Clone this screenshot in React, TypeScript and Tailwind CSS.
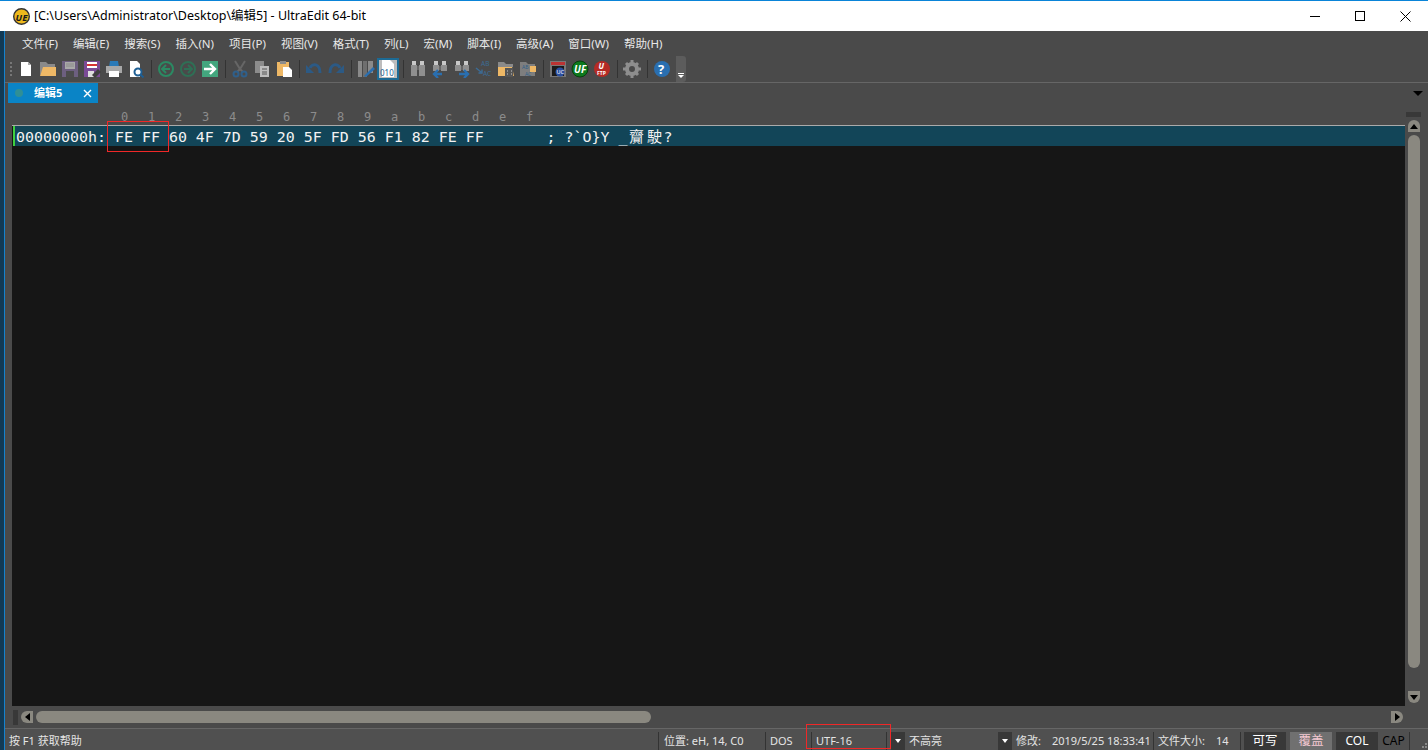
import type { ReactNode } from "react"

const mono = "font-['DejaVu_Sans_Mono','Noto_Sans_CJK_SC',monospace]"
const ui = "font-['Noto_Sans','Noto_Sans_CJK_SC',sans-serif]"

const menus = ["文件(F)", "编辑(E)", "搜索(S)", "插入(N)", "项目(P)", "视图(V)", "格式(T)", "列(L)", "宏(M)", "脚本(I)", "高级(A)", "窗口(W)", "帮助(H)"]
const rulerDigits = ["0", "1", "2", "3", "4", "5", "6", "7", "8", "9", "a", "b", "c", "d", "e", "f"]

function Sep() {
  return (
    <div className="flex w-2 justify-center">
      <div className="h-[18px] w-px bg-[#333]" />
    </div>
  )
}

function Btn({ children, active }: { children: ReactNode; active?: boolean }) {
  return (
    <div className={`flex h-[22px] w-[22px] items-center justify-center ${active ? "border-2 border-[#1c6a94] bg-[#bdbdbd]" : ""}`}>
      <svg className="shrink-0" width="18" height="18" viewBox="0 0 18 18">
        {children}
      </svg>
    </div>
  )
}

function Binoculars({ bottom = 16 }: { bottom?: number }) {
  return (
    <g>
      <rect x="3" y="1" width="4" height="4" fill="#c8c8c8" />
      <rect x="11" y="1" width="4" height="4" fill="#c8c8c8" />
      <rect x="2" y="5" width="6" height={bottom - 5} fill="#8f8f8f" />
      <rect x="10" y="5" width="6" height={bottom - 5} fill="#8f8f8f" />
      <rect x="8" y="6" width="2" height="4" fill="#666" />
    </g>
  )
}

function Toolbar() {
  return (
    <div className="flex h-[26px] items-center">
      <div className="ml-[5px] mr-[3px] flex h-[14px] w-[2px] flex-col justify-between">
        <div className="h-[2px] w-[2px] bg-[#777]" />
        <div className="h-[2px] w-[2px] bg-[#777]" />
        <div className="h-[2px] w-[2px] bg-[#777]" />
        <div className="h-[2px] w-[2px] bg-[#777]" />
      </div>
      <Btn><path d="M4 2h7l3 3v11H4z" fill="#fff" /><path d="M11 2v3h3" fill="#aaa" /></Btn>
      <Btn><path d="M1 2h6l2 2h7v3H5L1 16z" fill="#8a8a8a" /><path d="M1 16l3-9h13v9z" fill="#eeb866" /></Btn>
      <Btn><path d="M1 1h16v16H1z" fill="#6d5f80" /><rect x="4" y="2" width="10" height="7" fill="#a9a9a9" /><path d="M5 4h8M5 6h8" stroke="#8a8a8a" /><rect x="5" y="11" width="8" height="6" fill="#4c4c4c" /></Btn>
      <Btn><path d="M1 1h16v16H1z" fill="#7a4a96" /><rect x="4" y="2" width="10" height="6" fill="#fff" /><rect x="4" y="4" width="10" height="2" fill="#d63333" /><rect x="5" y="11" width="6" height="6" fill="#ddd" /><path d="M9 15l6-6 3 3-6 6z" fill="#3f3f3f" /></Btn>
      <Btn><path d="M5 1h8l1 6H4z" fill="#2a7ab8" /><rect x="1" y="6" width="16" height="7" fill="#a8a8a8" /><rect x="4" y="11" width="10" height="6" fill="#fff" /></Btn>
      <Btn><path d="M3 1h7l3 3v13H3z" fill="#fff" /><circle cx="11" cy="12" r="3.5" fill="#fff" stroke="#1e5f94" strokeWidth="2" /><path d="M13.5 14.5l3 3" stroke="#1e5f94" strokeWidth="2" /></Btn>
      <Sep />
      <Btn><circle cx="9" cy="9" r="7" fill="none" stroke="#2b8a63" strokeWidth="2" /><path d="M13 9H6M9 5L5 9l4 4" fill="none" stroke="#2b8a63" strokeWidth="2" /></Btn>
      <Btn><circle cx="9" cy="9" r="7" fill="none" stroke="#2f6f55" strokeWidth="2" /><path d="M5 9h7M9 5l4 4-4 4" fill="none" stroke="#2f6f55" strokeWidth="2" /></Btn>
      <Btn><rect x="1" y="1" width="16" height="16" fill="#43a67e" /><path d="M3 9h10M9 4l5 5-5 5" fill="none" stroke="#fff" strokeWidth="2.4" /></Btn>
      <Sep />
      <Btn><path d="M4 1l5 8 5-8M9 9l-3 3M9 9l3 3" fill="none" stroke="#666" strokeWidth="2" /><circle cx="5" cy="14" r="2.5" fill="none" stroke="#2f5f8a" strokeWidth="2" /><circle cx="13" cy="14" r="2.5" fill="none" stroke="#2f5f8a" strokeWidth="2" /></Btn>
      <Btn><rect x="2" y="1" width="9" height="12" fill="#8c8c8c" /><rect x="7" y="6" width="9" height="11" fill="#bdbdbd" /><path d="M9 9h5M9 12h5M9 14h5" stroke="#555" /></Btn>
      <Btn><rect x="2" y="2" width="12" height="14" fill="#eeb866" /><rect x="5" y="1" width="6" height="3" fill="#8c8c8c" /><path d="M8 7h6l3 3v7H8z" fill="#fff" /></Btn>
      <Sep />
      <Btn><path d="M5 8C7 3 15 3 15 13" fill="none" stroke="#2c5a85" strokeWidth="3" /><path d="M1 5v8h8z" fill="#2c5a85" /></Btn>
      <Btn><path d="M13 8C11 3 3 3 3 13" fill="none" stroke="#2c5a85" strokeWidth="3" /><path d="M17 5v8H9z" fill="#2c5a85" /></Btn>
      <Sep />
      <Btn><rect x="1" y="1" width="4" height="16" fill="#8a8a8a" /><rect x="6" y="1" width="4" height="16" fill="#6f6f6f" /><rect x="11" y="1" width="5" height="12" fill="#8a8a8a" /><path d="M7 16l9-9 2 2-9 8z" fill="#2a6fb0" /></Btn>
      <Btn active><path d="M3 0h8l4 4v13H3z" fill="#fff" /><text x="1" y="16" fontSize="8" fill="#1e5f94" className={ui}>010</text></Btn>
      <Sep />
      <Btn><Binoculars /></Btn>
      <Btn><Binoculars bottom={11} /><path d="M11 14H3M7 10l-4 4 4 4" fill="none" stroke="#2a6fb0" strokeWidth="2.4" /></Btn>
      <Btn><Binoculars bottom={11} /><path d="M6 14h9M11 10l4 4-4 4" fill="none" stroke="#2a6fb0" strokeWidth="2.4" /></Btn>
      <Btn><text x="6" y="6" fontSize="6.5" fill="#3c6c96" className={ui}>AB</text><text x="8" y="16" fontSize="6.5" fill="#3c6c96" className={ui}>AC</text><path d="M1 8l5 4M3.5 13H7V9.5" fill="none" stroke="#3c6c96" strokeWidth="1.4" /></Btn>
      <Btn><path d="M1 2h6l2 2h7v3H1z" fill="#8a8a8a" /><path d="M1 7h14l2 9H1z" fill="#eeb866" /><rect x="8" y="8" width="8" height="9" fill="#555" /><path d="M10 11h1M14 11h1M10 14h1M14 14h1" stroke="#ccc" /></Btn>
      <Btn><path d="M1 2h6l2 2h7v12H1z" fill="#7e7e7e" /><rect x="11" y="6" width="6" height="6" fill="#eeb866" /><text x="3" y="9" fontSize="5" fill="#2f5f8a" className={ui}>AB</text><text x="6" y="16" fontSize="5" fill="#2f5f8a" className={ui}>AC</text></Btn>
      <Sep />
      <Btn><rect x="1" y="1" width="16" height="16" fill="#777" /><rect x="2" y="2" width="14" height="3" fill="#bb3333" /><rect x="3" y="6" width="12" height="10" fill="#1a1a1a" /><circle cx="11" cy="12" r="4.5" fill="#2a4fa0" /><text x="7.5" y="14" fontSize="5.5" fill="#fff" className={ui}>UC</text></Btn>
      <Btn><circle cx="9" cy="9" r="8" fill="#0d7a1e" stroke="#08400f" /><text x="3" y="13" fontSize="10" fontWeight="700" fontStyle="italic" fill="#fff" className={ui}>UF</text></Btn>
      <Btn><circle cx="9" cy="9" r="8" fill="#b52b25" /><text x="5.5" y="9" fontSize="8" fontWeight="700" fontStyle="italic" fill="#fff" className={ui}>U</text><text x="4" y="15" fontSize="5" fontWeight="700" fill="#fff" className={ui}>FTP</text></Btn>
      <Sep />
      <Btn><circle cx="9" cy="9" r="5" fill="none" stroke="#8e8e8e" strokeWidth="4" /><path d="M9 0v4M9 14v4M0 9h4M14 9h4M3 3l3 3M12 12l3 3M15 3l-3 3M6 12l-3 3" stroke="#8e8e8e" strokeWidth="3" /></Btn>
      <Sep />
      <Btn><circle cx="9" cy="9" r="8" fill="#2a6fb0" /><text x="5" y="14" fontSize="13" fontWeight="700" fill="#fff" className={ui}>?</text></Btn>
      <div className="ml-[3px] flex h-[26px] w-[10px] flex-col items-center justify-end rounded-r-[3px] bg-[#5c5c5c] pb-1">
        <div className="mb-px h-px w-[6px] bg-white" />
        <div className="h-0 w-0 border-x-[3px] border-t-[3px] border-x-transparent border-t-white" />
      </div>
    </div>
  )
}

function ScrollArrow({ dir }: { dir: "up" | "down" | "left" | "right" }) {
  const arrow =
    dir === "up"
      ? "border-x-[4px] border-b-[5px] border-x-transparent border-b-black"
      : dir === "down"
        ? "border-x-[4px] border-t-[5px] border-x-transparent border-t-black"
        : dir === "left"
          ? "border-y-[4px] border-r-[5px] border-y-transparent border-r-black"
          : "border-y-[4px] border-l-[5px] border-y-transparent border-l-black"
  const round =
    dir === "up"
      ? "rounded-t-[6px]"
      : dir === "down"
        ? "rounded-b-[6px]"
        : dir === "left"
          ? "rounded-l-[6px]"
          : "rounded-r-[6px]"
  return (
    <div className={`flex h-3 w-3 items-center justify-center bg-[#8a8880] ${round}`}>
      <div className={`h-0 w-0 ${arrow}`} />
    </div>
  )
}

function Cell({ w, children, sep = true }: { w: string; children?: ReactNode; sep?: boolean }) {
  return (
    <div className={`flex h-[18px] shrink-0 items-center ${w} ${sep ? "border-r border-[#333]" : ""}`}>
      {children}
    </div>
  )
}

function DropArrow() {
  return (
    <div className="flex h-[18px] w-[14px] shrink-0 items-center justify-center bg-[#383838]">
      <div className="h-0 w-0 border-x-[3px] border-t-[4px] border-x-transparent border-t-white" />
    </div>
  )
}

function Status() {
  return (
    <div className={`relative flex h-[22px] items-end border-t border-[#666] bg-[#505050] text-[11px] text-[#e4e4e4] ${ui}`}>
      <div className="flex h-[18px] w-[654px] shrink-0 items-center border-r border-[#333] pl-[4px]">按 F1 获取帮助</div>
      <Cell w="w-[107px]"><span className="pl-[5px]">位置: eH, 14, C0</span></Cell>
      <Cell w="w-[46px]"><span className="pl-[4px]">DOS</span></Cell>
      <Cell w="w-[75px]"><span className="pl-[4px]">UTF-16</span></Cell>
      <div className="w-1 shrink-0" />
      <DropArrow />
      <Cell w="w-[93px]" sep={false}><span className="pl-[4px]">不高亮</span></Cell>
      <DropArrow />
      <Cell w="w-[142px]">
        <span className="pl-[4px]">修改:</span>
        <span className="pl-[11px]">2019/5/25 18:33:41</span>
      </Cell>
      <Cell w="w-[87px]">
        <span className="pl-[4px]">文件大小:</span>
        <span className="pl-[11px]">14</span>
      </Cell>
      <div className="ml-[3px] flex h-[18px] w-[42px] items-center justify-center bg-[#383838] text-[12.5px] text-white">可写</div>
      <div className="ml-1 flex h-[18px] w-[42px] items-center justify-center bg-[#707070] text-[12.5px] text-[#f4c8d2]">覆盖</div>
      <div className="ml-1 flex h-[18px] w-[42px] items-center justify-center bg-[#383838] text-xs text-white">COL</div>
      <div className="flex h-[18px] w-[32px] items-center justify-center border-r border-[#333] text-xs text-black">CAP</div>
      <div className="absolute bottom-[2px] right-[1px] grid grid-cols-3 gap-px">
        <span />
        <span />
        <span className="h-[2px] w-[2px] bg-[#888]" />
        <span />
        <span className="h-[2px] w-[2px] bg-[#888]" />
        <span className="h-[2px] w-[2px] bg-[#888]" />
      </div>
      <div className="pointer-events-none absolute left-[801px] top-[-5px] h-[25px] w-[85px] border border-[#f02828]" />
    </div>
  )
}

export default function App() {
  return (
    <div className={`flex h-[750px] w-[1428px] flex-col overflow-hidden bg-white ${ui}`}>
      <div className="flex h-[31px] shrink-0 items-center border-t border-[#0a84d8] bg-white">
        <svg className="ml-[13px] shrink-0" width="17" height="17" viewBox="0 0 17 17">
          <circle cx="8.5" cy="8.5" r="7.8" fill="#eeb91c" stroke="#333" strokeWidth="1.4" />
          <text x="2.6" y="12.5" fontSize="9.5" fontWeight="700" fontStyle="italic" fill="#1a1a1a" className={ui}>UE</text>
        </svg>
        <span className="ml-[4px] whitespace-nowrap text-[12.5px] text-black">[C:\Users\Administrator\Desktop\编辑5] - UltraEdit 64-bit</span>
        <div className="ml-auto flex items-center">
          <div className="mr-[35px] h-px w-[10px] bg-black" />
          <div className="mr-[35px] h-[10px] w-[10px] border border-black" />
          <svg className="mr-[17px]" width="11" height="11" viewBox="0 0 11 11">
            <path d="M.5.5l10 10M10.5.5l-10 10" stroke="#000" />
          </svg>
        </div>
      </div>

      <div className="flex min-h-0 flex-1">
        <div className="w-[5px] shrink-0 border-r border-[#1583cf] bg-[#123a55]" />
        <div className="flex min-w-0 flex-1 flex-col bg-[#4a4a4a]">
          <div className="flex h-[25px] shrink-0 items-center pl-[17px] text-[11.5px] text-[#e8e8e8]">
            {menus.map((m) => (
              <span key={m} className="mr-[15px] whitespace-nowrap">{m}</span>
            ))}
          </div>
          <Toolbar />
          <div className="h-px shrink-0 bg-[#666]" />

          <div className="flex h-5 shrink-0 items-center">
            <div className="ml-[3px] flex h-5 w-[90px] items-center bg-[#0a84c6] text-[11px] text-white">
              <div className="ml-[7px] h-[8px] w-[8px] rounded-full bg-[#2f8f96]" />
              <span className="ml-[11px] font-bold">编辑5</span>
              <svg className="ml-auto mr-[6px]" width="9" height="9" viewBox="0 0 9 9">
                <path d="M1 1l7 7M8 1l-7 7" stroke="#fff" strokeWidth="1.4" />
              </svg>
            </div>
            <div className="ml-auto mr-[5px] h-0 w-0 border-x-[5px] border-t-[5px] border-x-transparent border-t-black" />
          </div>

          <div className={`flex h-[22px] shrink-0 items-end pl-[106px] text-xs text-[#8c8c8c] ${mono}`}>
            {rulerDigits.map((d) => (
              <span key={d} className="w-[27px] text-center">{d}</span>
            ))}
          </div>

          <div className="relative flex min-h-0 flex-1">
            <div className="flex min-w-0 flex-1 flex-col pl-[7px]">
              <div className="min-h-0 flex-1 border-t border-[#aaa] bg-[#161616]">
                <div className="ml-px flex h-5 items-center border-l-2 border-[#3fd03f] bg-[#124558] pl-px">
                  <pre className={`pt-px text-[14.95px] leading-5 text-[#f2f2f2] ${mono}`}>
                    {"00000000h: FE FF 60 4F 7D 59 20 5F FD 56 F1 82 FE FF       ; ?`O}Y _"}
                    <span className="inline-block w-[18px] text-center">齎</span>
                    <span className="inline-block w-[18px] text-center">駛</span>
                    {"?"}
                  </pre>
                </div>
              </div>
              <div className="flex h-[22px] shrink-0 items-center pl-px">
                <div className="h-[15px] w-[5px] bg-[#383838]" />
                <div className="ml-[3px]"><ScrollArrow dir="left" /></div>
                <div className="ml-[3px] h-3 w-[615px] rounded-full bg-[#8a8880]" />
                <div className="ml-auto mr-[2px]"><ScrollArrow dir="right" /></div>
              </div>
            </div>
            <div className="flex w-[23px] shrink-0 flex-col items-start pl-[3px]">
              <div className="-ml-[2px] mt-[-13px] h-[5px] w-[15px] bg-[#383838]" />
              <div className="mt-[3px]"><ScrollArrow dir="up" /></div>
              <div className="mt-[3px] h-[533px] w-3 rounded-full bg-[#8a8880]" />
              <div className="mt-auto mb-[25px]"><ScrollArrow dir="down" /></div>
            </div>
            <div className="pointer-events-none absolute left-[102px] top-[-4px] h-[31px] w-[62px] border border-[#f02828]" />
          </div>
          <Status />
        </div>
      </div>
    </div>
  )
}
